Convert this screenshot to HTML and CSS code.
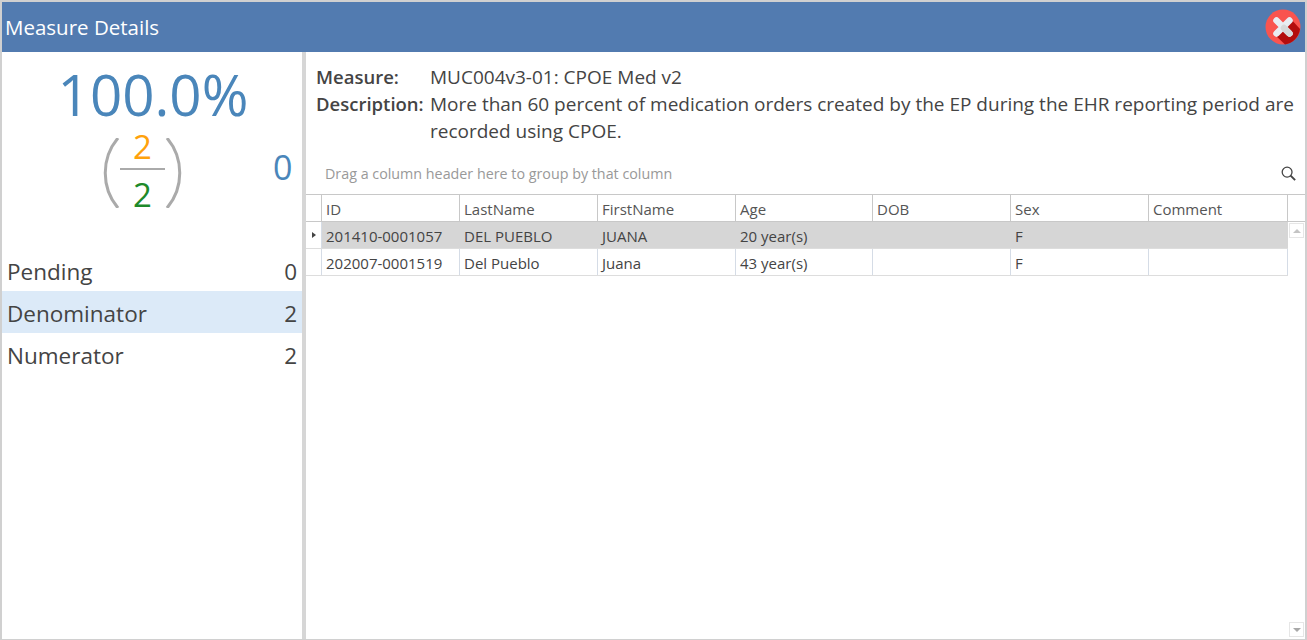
FILE: index.html
```html
<!DOCTYPE html>
<html lang="en">
<head>
    <meta charset="UTF-8">
    <title>Measure Details</title>
    <link rel="stylesheet" href="styles.css">
</head>
<body>
    <div class="window">
        <div class="titlebar">
            <div class="title">Measure Details</div>
            <svg class="close" width="36" height="36" viewBox="0 0 36 36">
                <circle cx="18" cy="18" r="17.5" fill="#f9544f"/>
                <path d="M25 9 L35 20 A17.5 17.5 0 0 1 20 35.4 L9 25 Z" fill="#b30d0d"/>
                <path d="M11.5 11.5 L24.5 24.5 M24.5 11.5 L11.5 24.5" fill="none" stroke="#e8ecf2" stroke-width="6.5" stroke-linecap="round"/>
                <path d="M19 19 L24.5 24.5" fill="none" stroke="#d6d8da" stroke-width="6.5" stroke-linecap="round"/>
            </svg>
        </div>
        <div class="main">
            <div class="side">
                <div class="percent">100.0%</div>
                <div class="ratio">
                    <div class="fraction">
                        <svg class="paren" width="18" height="70" viewBox="0 0 18 70">
                            <path d="M16 0 C-1 20 -1 50 16 70" fill="none" stroke="#aaaaaa" stroke-width="3"/>
                        </svg>
                        <div class="nums">
                            <div class="num orange">2</div>
                            <div class="line"></div>
                            <div class="num green">2</div>
                        </div>
                        <svg class="paren" width="18" height="70" viewBox="0 0 18 70">
                            <path d="M2 0 C19 20 19 50 2 70" fill="none" stroke="#aaaaaa" stroke-width="3"/>
                        </svg>
                    </div>
                    <div class="extra">0</div>
                </div>
                <div class="counts">
                    <div class="count"><span>Pending</span><span>0</span></div>
                    <div class="count selected"><span>Denominator</span><span>2</span></div>
                    <div class="count"><span>Numerator</span><span>2</span></div>
                </div>
            </div>
            <div class="content">
                <div class="info">
                    <div class="label">Measure:</div>
                    <div>MUC004v3-01: CPOE Med v2</div>
                    <div class="label">Description:</div>
                    <div>More than 60 percent of medication orders created by the EP during the EHR reporting period are recorded using CPOE.</div>
                </div>
                <div class="grouppanel">
                    <span>Drag a column header here to group by that column</span>
                    <svg width="15" height="15" viewBox="0 0 14 14">
                        <circle cx="5.7" cy="5.7" r="4.6" fill="none" stroke="#444" stroke-width="1.2"/>
                        <path d="M9 9 L13.2 13.2" stroke="#444" stroke-width="1.8"/>
                    </svg>
                </div>
                <div class="grid">
                    <div class="gridrow header">
                        <div class="indicator"></div>
                        <div class="cell">ID</div>
                        <div class="cell">LastName</div>
                        <div class="cell">FirstName</div>
                        <div class="cell">Age</div>
                        <div class="cell">DOB</div>
                        <div class="cell">Sex</div>
                        <div class="cell">Comment</div>
                    </div>
                    <div class="gridbody">
                        <div class="rows">
                            <div class="gridrow current">
                                <div class="indicator"><span class="arrow"></span></div>
                                <div class="cell">201410-0001057</div>
                                <div class="cell">DEL PUEBLO</div>
                                <div class="cell">JUANA</div>
                                <div class="cell">20 year(s)</div>
                                <div class="cell"></div>
                                <div class="cell">F</div>
                                <div class="cell"></div>
                            </div>
                            <div class="gridrow">
                                <div class="indicator"></div>
                                <div class="cell">202007-0001519</div>
                                <div class="cell">Del Pueblo</div>
                                <div class="cell">Juana</div>
                                <div class="cell">43 year(s)</div>
                                <div class="cell"></div>
                                <div class="cell">F</div>
                                <div class="cell"></div>
                            </div>
                        </div>
                        <div class="scrollbar">
                            <div class="scrollbtn"><span class="up"></span></div>
                            <div class="scrollbtn"><span class="down"></span></div>
                        </div>
                    </div>
                </div>
            </div>
        </div>
    </div>
</body>
</html>
```

FILE: styles.css
```css
* {
    box-sizing: border-box;
}

body {
    margin: 0;
    font-family: "Open Sans", "Noto Sans", sans-serif;
    color: #444444;
    background: #ffffff;
}

.window {
    width: 1307px;
    height: 640px;
    border: 2px solid #d0d0d0;
    border-bottom: 1px solid #d0d0d0;
    display: flex;
    flex-direction: column;
}

.titlebar {
    height: 50px;
    background-color: #527bb0;
    color: #ffffff;
    display: flex;
    align-items: center;
    justify-content: space-between;
    padding: 0 4px 0 3px;
    flex-shrink: 0;
}

.title {
    font-size: 20.5px;
}

.main {
    flex: 1;
    display: flex;
    min-height: 0;
}

.side {
    width: 300px;
    flex-shrink: 0;
}

.percent {
    font-size: 56.5px;
    line-height: 76px;
    color: #4a86ba;
    text-align: center;
    margin-top: 5px;
    padding-left: 2px;
}

.ratio {
    display: flex;
    height: 70px;
    padding-left: 100px;
    margin-top: 5px;
}

.fraction {
    display: flex;
    width: 81px;
}

.nums {
    width: 45px;
    height: 70px;
    display: flex;
    flex-direction: column;
    align-items: center;
}

.num {
    font-size: 33px;
    line-height: 30px;
    height: 30px;
}

.orange {
    color: #ffa20c;
    margin-top: -6px;
    margin-bottom: 6px;
}

.green {
    color: #1e8a2a;
    margin-top: 10px;
}

.line {
    width: 45px;
    height: 2px;
    flex-shrink: 0;
    background-color: #aaaaaa;
}

.extra {
    font-size: 34px;
    line-height: 40px;
    color: #4a86ba;
    margin-left: 90px;
    margin-top: 9px;
}

.counts {
    margin-top: 41px;
}

.count {
    height: 42px;
    padding: 2px 5px 0;
    display: flex;
    justify-content: space-between;
    align-items: center;
    font-size: 22.5px;
}

.selected {
    background-color: #dceaf8;
}

.content {
    flex: 1;
    min-width: 0;
    border-left: 4px solid #d6d6d6;
    display: flex;
    flex-direction: column;
}

.info {
    display: grid;
    grid-template-columns: 114px 1fr;
    align-content: start;
    padding: 12px 8px 0 10px;
    font-size: 19px;
    line-height: 27px;
    height: 108px;
}

.label {
    font-size: 18.5px;
    line-height: 25px;
    font-weight: 600;
}

.grouppanel {
    height: 34px;
    display: flex;
    align-items: center;
    justify-content: space-between;
    padding: 0 9px 8px 19px;
    font-size: 14.3px;
    color: #999999;
}

.grid {
    flex: 1;
    border-top: 1px solid #c8c8c8;
    font-size: 15px;
}

.gridrow {
    display: grid;
    grid-template-columns: 16px 138px 138px 138px 137px 138px 138px 139px;
    grid-template-rows: 26px;
    height: 27px;
    line-height: 24px;
}

.header {
    border-bottom: 1px solid #c8c8c8;
    color: #555555;
}

.header .cell {
    border-right: 1px solid #c8c8c8;
}

.header .indicator {
    border-right: 1px solid #c8c8c8;
}

.gridbody {
    display: flex;
    height: 417px;
}

.rows {
    width: 982px;
}

.cell {
    padding: 2px 0 0 4px;
    border-right: 1px solid #d5dce6;
    white-space: nowrap;
}

.rows .gridrow {
    border-bottom: 1px solid #dddddd;
}

.rows .indicator {
    border-right: 1px solid #d5dce6;
    display: flex;
    align-items: center;
    justify-content: center;
}

.current {
    background: linear-gradient(to right, transparent 16px, #d6d6d6 16px);
}

.current .cell {
    border-right-color: #d6d6d6;
}

.arrow {
    border-left: 4px solid #444444;
    border-top: 3px solid transparent;
    border-bottom: 3px solid transparent;
}

.scrollbar {
    width: 15px;
    margin-left: 1px;
    padding-top: 1px;
    padding-bottom: 2px;
    display: flex;
    flex-direction: column;
    justify-content: space-between;
}

.scrollbtn {
    width: 15px;
    height: 15px;
    border: 1px solid #e6e6e6;
    display: flex;
    align-items: center;
    justify-content: center;
}

.up {
    border-bottom: 4px solid #c4c4c4;
    border-left: 4px solid transparent;
    border-right: 4px solid transparent;
}

.down {
    border-top: 4px solid #a8a8a8;
    border-left: 4px solid transparent;
    border-right: 4px solid transparent;
}
```
